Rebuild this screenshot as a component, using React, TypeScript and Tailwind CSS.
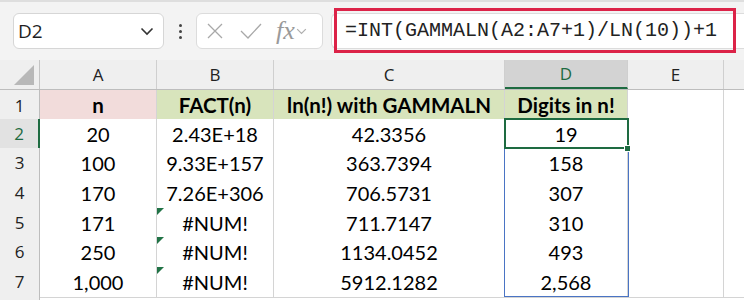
import React from 'react';

const COLS = ['A', 'B', 'C', 'D', 'E'];
const ROW_H = ['h-[29px]', 'h-[29px]', 'h-[30px]', 'h-[30px]', 'h-[29px]', 'h-[30px]', 'h-[29px]'];

const DATA: string[][] = [
    ['n', 'FACT(n)', 'ln(n!) with GAMMALN', 'Digits in n!'],
    ['20', '2.43E+18', '42.3356', '19'],
    ['100', '9.33E+157', '363.7394', '158'],
    ['170', '7.26E+306', '706.5731', '307'],
    ['171', '#NUM!', '711.7147', '310'],
    ['250', '#NUM!', '1134.0452', '493'],
    ['1,000', '#NUM!', '5912.1282', '2,568'],
];

const gridCols = 'grid grid-cols-[40px_117px_117px_231px_123px_96px_1fr]';

const Chevron: React.FC<{ className?: string }> = ({ className }) => (
    <svg className={className} width="14" height="9" viewBox="0 0 14 9" fill="none" stroke="currentColor" strokeWidth="1.6">
        <path d="M1.5 1.5 L7 7 L12.5 1.5" />
    </svg>
);

const FormulaBar: React.FC = () => (
    <div className="h-[60px] bg-[#f3f3f3] border-t-2 border-[#dedede] flex items-center pl-[13px]">
        <div className="w-[151px] h-[36px] bg-white border border-[#d6d6d6] rounded-[6px] flex items-center justify-between pl-[4px] pr-[9px]">
            <span className="text-[19px] text-[#1f1f1f] font-['Open_Sans',sans-serif]">D2</span>
            <Chevron className="text-[#333]" />
        </div>
        <div className="w-[32px] flex flex-col items-center gap-[3px]">
            <span className="w-[3px] h-[3px] bg-[#444] rounded-full" />
            <span className="w-[3px] h-[3px] bg-[#444] rounded-full" />
            <span className="w-[3px] h-[3px] bg-[#444] rounded-full" />
        </div>
        <div className="w-[127px] h-[36px] bg-white border border-[#dcdcdc] rounded-[6px] flex items-center pl-[10px] text-[#a8a8a8]">
            <svg width="16" height="16" viewBox="0 0 16 16" stroke="currentColor" strokeWidth="1.3" fill="none">
                <path d="M1 1 L15 15 M15 1 L1 15" />
            </svg>
            <svg className="ml-[17px]" width="22" height="16" viewBox="0 0 22 16" stroke="currentColor" strokeWidth="1.3" fill="none">
                <path d="M1 8 L8 15 L21 1" />
            </svg>
            <span className="ml-[14px] text-[26px] italic leading-none font-['Liberation_Serif',serif] text-[#9a9a9a]">fx</span>
            <Chevron className="ml-[1px] w-[11px] text-[#b0b0b0]" />
        </div>
        <div className="ml-[8px] flex-1 h-[36px] bg-white border border-[#dcdcdc] rounded-l-[6px] border-r-0 relative">
            <div className="absolute left-[2px] top-[-6px] w-[402px] h-[45px] border-[3px] border-[#dc2348] flex items-center pl-[8px]">
                <span className="text-[20px] text-[#222] font-['Liberation_Mono',monospace]">=INT(GAMMALN(A2:A7+1)/LN(10))+1</span>
            </div>
        </div>
    </div>
);

const Sheet: React.FC = () => (
    <div className="relative font-['Lato',sans-serif]">
        {/* column header row */}
        <div className={`${gridCols} h-[30px] bg-[#efefef] border-b border-[#bdbdbd]`}>
            <div className="border-r border-[#c4c4c4] flex items-end justify-end pr-[5px] pb-[4px]">
                <svg width="20" height="20" viewBox="0 0 20 20">
                    <path d="M20 0 L20 20 L0 20 Z" fill="#b8b8b8" />
                </svg>
            </div>
            {COLS.map(c => (
                <div
                    key={c}
                    className={`flex items-center justify-center text-[17px] font-['Open_Sans',sans-serif] border-r border-[#cfcfcf] ${c === 'D' ? 'bg-[#d3d3d3] text-[#1e6b41] border-b-2 border-b-[#1e6b41]' : 'text-[#222]'}`}
                >
                    {c}
                </div>
            ))}
            <div />
        </div>
        {DATA.map((row, r) => (
            <div key={r} className={`${gridCols} ${ROW_H[r]}`}>
                <div className={`flex items-center justify-center text-[17px] font-['Open_Sans',sans-serif] border-b border-[#d2d2d2] ${r === 1 ? 'bg-[#e2e2e2] text-[#1e6b41] border-r-2 border-r-[#1e6b41]' : 'bg-[#efefef] text-[#222] border-r border-r-[#bdbdbd]'}`}>
                    {r + 1}
                </div>
                {row.map((v, c) => {
                    const bg = r === 0 ? (c === 0 ? 'bg-[#f2dcdb]' : 'bg-[#d8e4bc]') : 'bg-white';
                    return (
                        <div
                            key={c}
                            className={`relative flex items-center justify-center text-black border-r border-b border-[#d4d4d4] ${bg} ${r === 0 ? 'font-bold text-[20.5px]' : 'text-[20px]'}`}
                        >
                            {c === 1 && v === '#NUM!' && (
                                <svg className="absolute left-0 top-0" width="7" height="7" viewBox="0 0 7 7">
                                    <path d="M0 0 L7 0 L0 7 Z" fill="#217346" />
                                </svg>
                            )}
                            {v}
                        </div>
                    );
                })}
                <div className="border-r border-b border-[#d4d4d4] bg-white" />
                <div className="border-b border-[#d4d4d4] bg-white" />
            </div>
        ))}
        <div className={`${gridCols} h-[10px]`}>
            <div className="bg-[#efefef] border-r border-[#bdbdbd]" />
        </div>
        {/* spill range outline */}
        <div className="absolute left-[504px] top-[59px] w-[125px] h-[178px] border-[1.5px] border-[#4a74c4] pointer-events-none" />
        {/* active cell */}
        <div className="absolute left-[504px] top-[58px] w-[125px] h-[31px] border-2 border-[#1e6b41] pointer-events-none" />
        <div className="absolute left-[624px] top-[85px] w-[7px] h-[7px] bg-[#1e6b41] border border-white" />
    </div>
);

const App: React.FC = () => (
    <div className="w-[744px] h-[300px] overflow-hidden bg-white">
        <FormulaBar />
        <Sheet />
    </div>
);

export default App;
